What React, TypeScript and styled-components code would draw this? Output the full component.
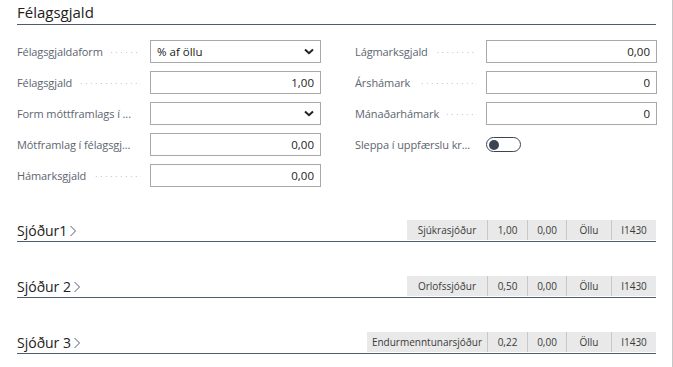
import React, { FC } from "react";
import styled, { createGlobalStyle } from "styled-components";

const GlobalStyle = createGlobalStyle`
  html, body {
    margin: 0;
    padding: 0;
    background: #ffffff;
    font-family: "Open Sans", "Noto Sans", sans-serif;
  }
`;

const Page = styled.div`
  box-sizing: border-box;
  width: 673px;
  height: 367px;
  border-right: 1px solid #c6c6c6;
  padding: 0 16px 0 17px;
  overflow: hidden;
`;

const Title = styled.div`
  height: 21px;
  font-size: 15px;
  color: #212121;
  border-bottom: 1px solid #505c6d;
  line-height: 19px;
  padding-top: 3px;
  box-sizing: content-box;
`;

const FormGrid = styled.div`
  display: grid;
  grid-template-columns: 304px 302px;
  column-gap: 34px;
  margin-top: 15px;
`;

const Column = styled.div`
  display: flex;
  flex-direction: column;
  gap: 8px;
`;

const Field = styled.div`
  display: flex;
  align-items: center;
  height: 23px;
`;

const Label = styled.div`
  flex: 1;
  display: flex;
  align-items: center;
  min-width: 0;
  font-size: 11px;
  letter-spacing: -0.1px;
  color: #5d6570;
  white-space: nowrap;
  margin-right: 9px;

  &::after {
    content: "";
    flex: 1;
    min-width: 4px;
    height: 1px;
    margin-left: 8px;
    margin-top: 2px;
    background-image: linear-gradient(to right, #c2c2c2 1px, transparent 1px);
    background-size: 5px 1px;
    background-repeat: repeat-x;
    background-position: right center;
  }
`;

const Input = styled.div<{ align?: "left" | "right" }>`
  box-sizing: border-box;
  width: 171px;
  height: 23px;
  border: 1px solid #a8a8a8;
  display: flex;
  align-items: center;
  justify-content: ${({ align }) => (align === "left" ? "space-between" : "flex-end")};
  padding: 0 6px 0 6px;
  font-size: 11.5px;
  color: #212121;
`;

const Toggle = styled.div`
  box-sizing: border-box;
  width: 35px;
  height: 15px;
  border: 1px solid #3b4453;
  border-radius: 8px;
  padding: 1px 2px;
  display: flex;
  align-items: center;
`;

const Knob = styled.div`
  width: 10px;
  height: 10px;
  border-radius: 50%;
  background: #3b4453;
`;

const Section = styled.div<{ first?: boolean }>`
  display: flex;
  align-items: flex-end;
  justify-content: space-between;
  border-bottom: 1px solid #505c6d;
  padding-bottom: 1px;
  margin-top: ${({ first }) => (first ? "33px" : "34px")};
`;

const SectionTitle = styled.div`
  display: flex;
  align-items: center;
  gap: 2px;
  font-size: 14px;
  color: #212121;
  line-height: 18px;
`;

const Cells = styled.div`
  display: flex;
  height: 20px;
`;

const Cell = styled.div<{ w: number }>`
  box-sizing: border-box;
  width: ${({ w }) => w}px;
  background: #e9e9e9;
  border-left: 1px solid #c8c8c8;
  display: flex;
  align-items: center;
  justify-content: center;
  font-size: 10px;
  color: #3a3a3a;

  &:first-child {
    border-left: none;
  }
`;

const Chevron: FC = () => (
  <svg width="8" height="12" viewBox="0 0 8 12">
    <polyline points="1.5,1 6.5,6 1.5,11" fill="none" stroke="#505c6d" strokeWidth="1" />
  </svg>
);

const DropArrow: FC = () => (
  <svg width="10" height="7" viewBox="0 0 10 7">
    <polyline points="1,1.5 5,5.2 9,1.5" fill="none" stroke="#212121" strokeWidth="2" />
  </svg>
);

type FieldData = {
  label: string;
  value?: string;
  kind: "number" | "select" | "toggle";
};

const leftFields: FieldData[] = [
  { label: "Félagsgjaldaform", value: "% af öllu", kind: "select" },
  { label: "Félagsgjald", value: "1,00", kind: "number" },
  { label: "Form móttframlags í ...", value: "", kind: "select" },
  { label: "Mótframlag í félagsgj...", value: "0,00", kind: "number" },
  { label: "Hámarksgjald", value: "0,00", kind: "number" },
];

const rightFields: FieldData[] = [
  { label: "Lágmarksgjald", value: "0,00", kind: "number" },
  { label: "Árshámark", value: "0", kind: "number" },
  { label: "Mánaðarhámark", value: "0", kind: "number" },
  { label: "Sleppa í uppfærslu kr...", kind: "toggle" },
];

const funds = [
  { name: "Sjóður1", fund: "Sjúkrasjóður", w: 80, rate: "1,00" },
  { name: "Sjóður 2", fund: "Orlofssjóður", w: 80, rate: "0,50" },
  { name: "Sjóður 3", fund: "Endurmenntunarsjóður", w: 120, rate: "0,22" },
];

const renderField = (f: FieldData) => (
  <Field key={f.label}>
    <Label>{f.label}</Label>
    {f.kind === "toggle" ? (
      <div style={{ width: 171 }}>
        <Toggle>
          <Knob />
        </Toggle>
      </div>
    ) : f.kind === "select" ? (
      <Input align="left">
        <span>{f.value}</span>
        <DropArrow />
      </Input>
    ) : (
      <Input>{f.value}</Input>
    )}
  </Field>
);

const App: FC = () => {
  return (
    <Page>
      <GlobalStyle />
      <Title>Félagsgjald</Title>
      <FormGrid>
        <Column>{leftFields.map(renderField)}</Column>
        <Column>{rightFields.map(renderField)}</Column>
      </FormGrid>
      {funds.map((s, index) => (
        <Section key={s.name} first={index === 0}>
          <SectionTitle>
            {s.name}
            <Chevron />
          </SectionTitle>
          <Cells>
            <Cell w={s.w}>{s.fund}</Cell>
            <Cell w={40}>{s.rate}</Cell>
            <Cell w={39}>0,00</Cell>
            <Cell w={45}>Öllu</Cell>
            <Cell w={45}>I1430</Cell>
          </Cells>
        </Section>
      ))}
    </Page>
  );
};

export default App;
